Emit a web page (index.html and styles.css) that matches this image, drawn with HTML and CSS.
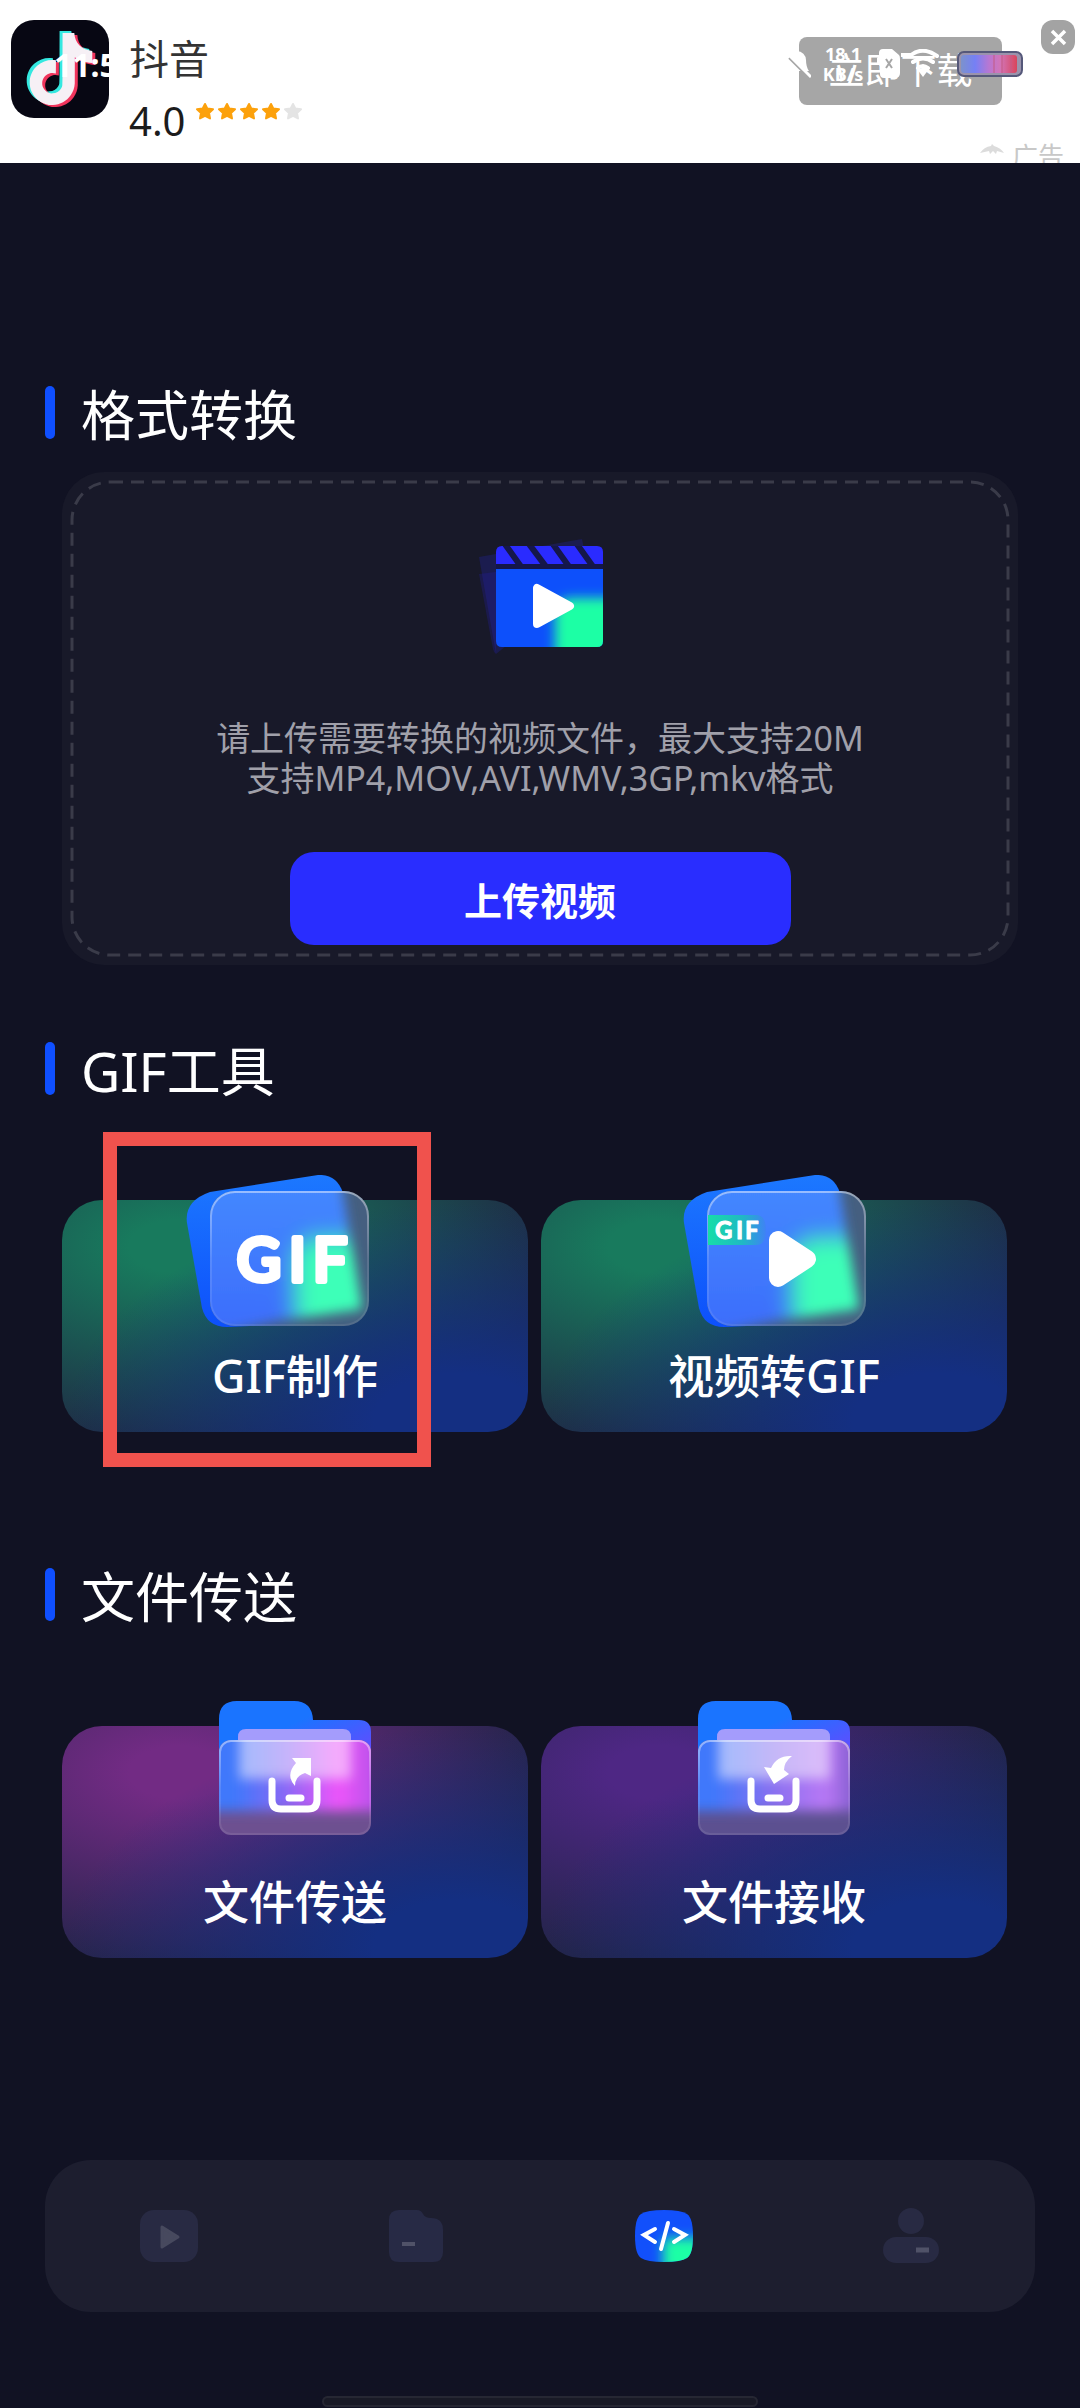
FILE: index.html
```html
<!DOCTYPE html>
<html lang="zh-CN">

<head>
    <meta charset="UTF-8">
    <meta name="viewport" content="width=device-width, initial-scale=1.0">
    <title>格式转换</title>
    <link rel="stylesheet" href="styles.css">
</head>

<body>
    <header class="ad">
        <svg class="ad-logo" viewBox="0 0 98 98">
            <defs>
                <path id="note" d="M12.525.02c1.31-.02 2.61-.01 3.91-.02.08 1.53.63 3.09 1.75 4.17 1.12 1.11 2.7 1.62 4.24 1.79v4.03c-1.44-.05-2.89-.35-4.2-.97-.57-.26-1.1-.59-1.62-.93-.01 2.92.01 5.84-.02 8.75-.08 1.4-.54 2.79-1.35 3.94-1.31 1.92-3.58 3.17-5.91 3.21-1.43.08-2.86-.31-4.08-1.03-2.02-1.19-3.44-3.37-3.65-5.71-.02-.5-.03-1-.01-1.49.18-1.9 1.12-3.72 2.58-4.96 1.66-1.44 3.98-2.13 6.15-1.72.02 1.48-.04 2.96-.04 4.44-.99-.32-2.15-.23-3.02.37-.63.41-1.11 1.04-1.36 1.75-.21.51-.15 1.07-.14 1.61.24 1.64 1.82 3.02 3.5 2.87 1.12-.01 2.19-.66 2.77-1.61.19-.33.4-.67.41-1.06.1-1.79.06-3.57.07-5.36.01-4.03-.01-8.05.02-12.07z" />
            </defs>
            <rect width="98" height="98" rx="23" fill="#070713" />
            <use href="#note" transform="translate(11 11) scale(3)" fill="#35e8e0" />
            <use href="#note" transform="translate(17 15) scale(3)" fill="#f0345c" />
            <use href="#note" transform="translate(14 13) scale(3)" fill="#f6f0f5" />
        </svg>
        <div class="ad-info">
            <div class="ad-name">抖音</div>
            <div class="ad-rating">
                <span>4.0</span>
                <svg class="stars" viewBox="0 0 108 18">
                    <defs>
                        <path id="star" d="M10 2l2.400 4.600 5.600.7-4 3.700 1 5.400-5-2.500-5 2.500 1-5.400-4-3.700 5.600-.7z" stroke-width="2" stroke-linejoin="round" />
                    </defs>
                    <use href="#star" fill="#fca10c" stroke="#fca10c" />
                    <use href="#star" x="22" fill="#fca10c" stroke="#fca10c" />
                    <use href="#star" x="44" fill="#fca10c" stroke="#fca10c" />
                    <use href="#star" x="66" fill="#fca10c" stroke="#fca10c" />
                    <use href="#star" x="88" fill="#e4e4e4" stroke="#e4e4e4" />
                </svg>
            </div>
        </div>
        <button class="ad-download" type="button">立即下载</button>
        <button class="ad-close" type="button" aria-label="关闭">
            <svg viewBox="0 0 34 34">
                <path d="M11 11l13 13M24 11L11 24" stroke="#fff" stroke-width="3.500" />
            </svg>
        </button>
        <div class="ad-tag">
            <svg viewBox="0 0 24 12">
                <path d="M0 9Q4 3 11 2l1-2 2 2q7 2 10 7l-7-2-1 3-3-3-3 3-1-3z" fill="#dcdcdc" />
            </svg>
            <span>广告</span>
        </div>

        <!-- system status bar over the banner -->
        <div class="status">
            <span class="time">11:58</span>
            <svg class="mute" viewBox="0 0 30 30">
                <path d="M3 22q4-4 4-11a9 9 0 0 1 18 0q0 7 3 11z" fill="#fff" />
                <path d="M8 9l20 20" stroke="#a6a6a6" stroke-width="2" />
                <path d="M6 4l24 24" stroke="#fff" stroke-width="3" />
            </svg>
            <div class="speed"><span>18.1</span><span>KB/s</span></div>
            <svg class="sim" viewBox="0 0 24 30">
                <path d="M2 4q0-4 4-4h9l7 6q1 1 1 4v14q0 5-5 5H7q-4 0-4-4V17L0 14V9l2-2z" fill="#fff" />
                <path d="M9 10l6 9M15 10l-6 9" stroke="#a6a6a6" stroke-width="2" />
            </svg>
            <svg class="wifi" viewBox="0 0 44 30">
                <path d="M0 6h10Q22-3 36 7M12 13q10-7 20 0M17 19q5-4 10 0" fill="none" stroke="#fff" stroke-width="4" stroke-linecap="round" />
                <path d="M16 20h12l-6 8z" fill="#fff" />
            </svg>
            <svg class="battery" viewBox="0 0 66 26">
                <defs>
                    <linearGradient id="charge">
                        <stop offset="0" stop-color="#7c92cc" />
                        <stop offset=".25" stop-color="#7580f5" />
                        <stop offset=".5" stop-color="#b877d2" />
                        <stop offset=".7" stop-color="#d275b8" />
                        <stop offset="1" stop-color="#d8455c" />
                    </linearGradient>
                </defs>
                <rect x="1" y="1" width="64" height="24" rx="6" fill="#9a93ac" stroke="#55587a" stroke-width="2" />
                <rect x="4" y="4" width="56" height="18" rx="3" fill="url(#charge)" />
                <path d="M37 4v18M45 4v18M54 4v18" stroke="#c45a84" stroke-width="1" />
            </svg>
        </div>
    </header>

    <main>
        <h2>格式转换</h2>
        <section class="upload">
            <svg class="dashes">
                <rect x="10" y="10" rx="38" />
            </svg>
            <svg class="clapper" viewBox="0 0 130 120">
                <defs>
                    <filter id="soft" x="-50%" y="-50%" width="200%" height="200%">
                        <feGaussianBlur stdDeviation="6" />
                    </filter>
                    <filter id="softer" x="-50%" y="-50%" width="200%" height="200%">
                        <feGaussianBlur stdDeviation="10" />
                    </filter>
                    <clipPath id="clapperBody">
                        <path d="M21 31h107v72q0 6-6 6H27q-6 0-6-6z" />
                    </clipPath>
                    <clipPath id="clapperTop">
                        <path d="M21 26V14q0-6 6-6h95q6 0 6 6v12z" />
                    </clipPath>
                </defs>
                <path d="M4 19l103-18 8 40-94 75z" fill="#20218a" opacity=".4" />
                <path d="M4 36l17-2v82q-2-1-3-5z" fill="#241fa0" opacity=".3" />
                <g clip-path="url(#clapperTop)">
                    <rect x="21" y="8" width="107" height="20" fill="#2a2bff" />
                    <path d="M27 2l20 28M51 2l21 28M75 2l20 28M99 2l20 28" stroke="#15174a" stroke-width="6" />
                </g>
                <path d="M21 26h107v5H21z" fill="#14164a" />
                <g clip-path="url(#clapperBody)">
                    <rect x="21" y="31" width="107" height="78" fill="#0d50fb" />
                    <rect x="80" y="60" width="70" height="70" rx="16" fill="#1effa5" filter="url(#soft)" />
                </g>
                <path d="M62 50v36l33-18z" fill="#fff" stroke="#fff" stroke-width="8" stroke-linejoin="round" />
            </svg>
            <p>请上传需要转换的视频文件，最大支持20M<br>支持MP4,MOV,AVI,WMV,3GP,mkv格式</p>
            <button class="upload-btn" type="button">上传视频</button>
        </section>

        <h2>GIF工具</h2>
        <div class="tools">
            <a class="tool green marked" href="#">
                <svg class="tool-icon" viewBox="0 0 232 160">
                    <defs>
                        <linearGradient id="blue" x2="0" y2="1">
                            <stop offset="0" stop-color="#1c78ff" />
                            <stop offset="1" stop-color="#0d50fb" />
                        </linearGradient>
                        <linearGradient id="frost" x2="0" y2="1">
                            <stop offset="0" stop-color="#458cff" />
                            <stop offset="1" stop-color="#3b68fb" />
                        </linearGradient>
                        <linearGradient id="edge" x2="0" y2="1">
                            <stop offset="0" stop-color="#fff" stop-opacity=".45" />
                            <stop offset=".5" stop-color="#fff" stop-opacity=".12" />
                            <stop offset="1" stop-color="#fff" stop-opacity=".08" />
                        </linearGradient>
                        <clipPath id="glass">
                            <rect x="48" y="16" width="159" height="135" rx="25" />
                        </clipPath>
                        <clipPath id="sheet">
                            <path d="M30 0h148l22 134-84 12-90 20z" />
                        </clipPath>
                        <g id="gifCard">
                            <path d="M48 17L156 0q19-1 25 18l18 105q2 18-16 24l-118 5q-20 0-25-19L25 48q-3-22 23-31z" fill="url(#blue)" />
                            <g clip-path="url(#glass)">
                                <rect x="48" y="16" width="159" height="135" fill="#455f80" />
                                <g filter="url(#soft)">
                                    <g clip-path="url(#sheet)">
                                        <path d="M20-10h200v190H20z" fill="url(#frost)" />
                                        <rect x="132" y="62" width="100" height="100" rx="24" fill="#3effb8" filter="url(#softer)" />
                                    </g>
                                </g>
                            </g>
                            <rect x="49" y="17" width="157" height="133" rx="24" fill="none" stroke="url(#edge)" stroke-width="2" />
                        </g>
                    </defs>
                    <g transform="translate(-17 0)">
                        <use href="#gifCard" />
                        <text class="gif-big" y="106"><tspan x="75">G</tspan><tspan x="127">I</tspan><tspan x="151">F</tspan></text>
                    </g>
                </svg>
                <span>GIF制作</span>
            </a>
            <a class="tool green" href="#">
                <svg class="tool-icon" viewBox="0 0 232 160">
                    <defs>
                        <linearGradient id="tag">
                            <stop offset="0" stop-color="#17dda8" />
                            <stop offset=".6" stop-color="#20b8c4" />
                            <stop offset="1" stop-color="#3f82f5" />
                        </linearGradient>
                    </defs>
                    <use href="#gifCard" x="1" />
                    <path d="M50 40h48q10 0 10 15t-10 15H50z" fill="url(#tag)" />
                    <text class="gif-small" y="64"><tspan x="57">G</tspan><tspan x="78">I</tspan><tspan x="87">F</tspan></text>
                    <path d="M120 65v38l29-19z" fill="#fff" stroke="#fff" stroke-width="18" stroke-linejoin="round" />
                </svg>
                <span>视频转GIF</span>
            </a>
        </div>

        <h2>文件传送</h2>
        <div class="tools">
            <a class="tool pink" href="#">
                <svg class="tool-icon" viewBox="0 0 232 160">
                    <defs>
                        <linearGradient id="folderBack" x2="1" y2="1">
                            <stop offset=".4" stop-color="#1a74ff" />
                            <stop offset=".8" stop-color="#5a50ff" />
                        </linearGradient>
                        <linearGradient id="pinkFront">
                            <stop offset=".15" stop-color="#3f78fb" />
                            <stop offset=".45" stop-color="#8a68f5" />
                            <stop offset=".75" stop-color="#ee55fa" />
                            <stop offset="1" stop-color="#b050e8" />
                        </linearGradient>
                        <linearGradient id="violetFront">
                            <stop offset=".15" stop-color="#3f78fb" />
                            <stop offset=".5" stop-color="#8a70f0" />
                            <stop offset=".8" stop-color="#b878f5" />
                            <stop offset="1" stop-color="#7a58c8" />
                        </linearGradient>
                        <clipPath id="folderFront">
                            <rect x="40" y="39" width="152" height="95" rx="12" />
                        </clipPath>
                        <path id="folder" d="M40 18Q40 0 58 0h57q18 0 19 19h46q12 0 12 12v40H40z" />
                        <path id="tray" d="M93 80v19q0 9 9 9h27q9 0 9-9V80M110 97h12" fill="none" stroke="#fff" stroke-width="7" stroke-linecap="round" />
                        <g id="paper">
                            <rect x="60" y="28" width="112" height="50" fill="#fff" opacity=".5" filter="url(#soft)" />
                        </g>
                    </defs>
                    <use href="#folder" fill="url(#folderBack)" />
                    <path d="M59 45V36q0-8 8-8h97q8 0 8 8v9z" fill="#a49cfc" />
                    <g clip-path="url(#folderFront)">
                        <rect x="40" y="39" width="152" height="95" fill="#6d5090" />
                        <rect x="30" y="20" width="172" height="90" fill="url(#pinkFront)" filter="url(#soft)" />
                        <use href="#paper" />
                    </g>
                    <rect x="41" y="40" width="150" height="93" rx="11" fill="none" stroke="url(#edge)" stroke-width="2" />
                    <use href="#tray" />
                    <path d="M113 57h19v18l-6-3q-10 3-10 13-10-11 1-23z" fill="#fff" />
                </svg>
                <span>文件传送</span>
            </a>
            <a class="tool violet" href="#">
                <svg class="tool-icon" viewBox="0 0 232 160">
                    <use href="#folder" fill="url(#folderBack)" />
                    <path d="M59 45V36q0-8 8-8h97q8 0 8 8v9z" fill="#a49cfc" />
                    <g clip-path="url(#folderFront)">
                        <rect x="40" y="39" width="152" height="95" fill="#5c5090" />
                        <rect x="30" y="20" width="172" height="90" fill="url(#violetFront)" filter="url(#soft)" />
                        <use href="#paper" />
                    </g>
                    <rect x="41" y="40" width="150" height="93" rx="11" fill="none" stroke="url(#edge)" stroke-width="2" />
                    <use href="#tray" />
                    <path d="M134 55q-8 6-8 14l5 4-15 10-10-17 7 1q6-13 21-12z" fill="#fff" />
                </svg>
                <span>文件接收</span>
            </a>
        </div>
    </main>

    <nav class="tabbar">
        <a href="#" aria-label="视频">
            <svg viewBox="0 0 58 56">
                <rect y="2" width="58" height="52" rx="14" fill="#282a43" />
                <path d="M22 19v20l16-10z" fill="#47495e" stroke="#47495e" stroke-width="3" stroke-linejoin="round" />
            </svg>
        </a>
        <a href="#" aria-label="文件">
            <svg viewBox="0 0 58 56">
                <path d="M2 12Q2 2 12 2h18q4 0 6 4t8 4q12 0 12 12v22q0 10-10 10H12Q2 54 2 44z" fill="#272a45" />
                <path d="M15 36h13" stroke="#505268" stroke-width="4" />
            </svg>
        </a>
        <a href="#" aria-label="工具" aria-current="page">
            <svg viewBox="0 0 58 56">
                <defs>
                    <clipPath id="tile">
                        <path d="M0 28Q0 10 6 6t23-4 23 4 6 22-6 22-23 4-23-4-6-22z" />
                    </clipPath>
                </defs>
                <g clip-path="url(#tile)">
                    <rect width="58" height="56" fill="#1250fb" />
                    <rect x="28" y="30" width="50" height="50" fill="#1effa5" filter="url(#soft)" />
                </g>
                <path d="M20 21L9 27l11 7M39 21l11 6-11 7M33 15l-7 26" fill="none" stroke="#fff" stroke-width="4" stroke-linecap="round" />
            </svg>
        </a>
        <a href="#" aria-label="我的">
            <svg viewBox="0 0 58 56">
                <circle cx="29" cy="13" r="13" fill="#282a43" />
                <rect x="1" y="29" width="56" height="26" rx="13" fill="#282a43" />
                <path d="M34 42h13" stroke="#505268" stroke-width="5" />
            </svg>
        </a>
    </nav>
    <div class="home-bar"></div>
</body>

</html>
```

FILE: styles.css
```css
*,
*::before,
*::after {
    box-sizing: border-box;
}

body {
    margin: 0;
    min-height: 100vh;
    display: flex;
    flex-direction: column;
    background: #111223;
    color: #fff;
    font-family: 'Noto Sans', 'Noto Sans CJK SC', sans-serif;
}

svg {
    display: block;
}

button {
    border: none;
    padding: 0;
    color: #fff;
    font-family: inherit;
    cursor: pointer;
}

a {
    color: inherit;
    text-decoration: none;
}

/* ad banner */
.ad {
    position: relative;
    display: flex;
    align-items: flex-start;
    height: 163px;
    padding: 20px 5px 0 11px;
    background: #fff;
    overflow: hidden;
}

.ad-logo {
    width: 98px;
    height: 98px;
}

.ad-info {
    flex: 1;
    margin-left: 20px;
    padding-top: 8px;
    font-size: 40px;
    line-height: 62px;
}

.ad-name {
    color: #333;
}

.ad-rating {
    display: flex;
    gap: 10px;
    color: #1c1c1c;
}

.stars {
    width: 108px;
    height: 18px;
    margin-top: 12px;
}

.ad-download {
    width: 203px;
    height: 68px;
    margin: 17px 39px 0 0;
    border-radius: 8px;
    background: #a6a6a6;
    font-size: 36px;
    line-height: 68px;
}

.ad-close {
    width: 34px;
    height: 34px;
    border-radius: 12px;
    background: #a3a3a3;
}

.ad-tag {
    position: absolute;
    right: 16px;
    top: 138px;
    display: flex;
    gap: 8px;
    color: #c8c8c8;
    font-size: 26px;
    line-height: 36px;
}

.ad-tag svg {
    width: 24px;
    height: 12px;
    margin-top: 6px;
}

/* system status bar */
.status {
    position: absolute;
    left: 54px;
    right: 57px;
    top: 44px;
    height: 40px;
    display: flex;
    align-items: center;
}

.time {
    flex: 1;
    font-size: 32px;
    font-weight: 700;
}

.mute {
    width: 30px;
    height: 30px;
}

.speed {
    display: flex;
    flex-direction: column;
    align-items: center;
    margin: 0 14px 0 12px;
    width: 40px;
    font-size: 18px;
    font-weight: 700;
    line-height: 20px;
}

.sim {
    width: 24px;
    height: 30px;
}

.wifi {
    width: 44px;
    height: 30px;
    margin-right: 12px;
}

.battery {
    width: 66px;
    height: 26px;
}

main {
    padding: 223px 45px 0;
}

h2 {
    display: flex;
    gap: 26px;
    margin: 0;
    font-size: 54px;
    font-weight: 400;
    line-height: 58px;
}

h2::before {
    content: '';
    width: 10px;
    height: 53px;
    border-radius: 5px;
    background: #0f4fff;
}

/* upload card */
.upload {
    position: relative;
    display: flex;
    flex-direction: column;
    align-items: center;
    margin: 28px 17px 77px;
    padding: 66px 0 20px;
    border-radius: 42px;
    background: #181929;
}

.dashes {
    position: absolute;
    inset: 0;
    width: 100%;
    height: 100%;
}

.dashes rect {
    width: calc(100% - 20px);
    height: calc(100% - 20px);
    fill: none;
    stroke: #3a3b49;
    stroke-width: 3;
    stroke-dasharray: 13 8;
}

.clapper {
    width: 130px;
    height: 120px;
}

.upload p {
    margin: 60px 0 54px;
    color: #a0a0aa;
    font-size: 34px;
    line-height: 40px;
    text-align: center;
}

.upload-btn {
    position: relative;
    width: 501px;
    height: 93px;
    border-radius: 24px;
    background: #292dff;
    font-size: 38px;
    font-weight: 700;
}

/* tool tiles */
.tools {
    display: grid;
    grid-template-columns: 1fr 1fr;
    gap: 13px;
    margin: 100px 28px 136px 17px;
}

.tool {
    position: relative;
    display: flex;
    flex-direction: column;
    align-items: center;
    height: 232px;
    border-radius: 40px;
    font-size: 46px;
    font-weight: 500;
    line-height: 60px;
}

.green {
    background:
        radial-gradient(ellipse at 85% 95%, #142f82 15%, transparent 70%),
        radial-gradient(ellipse at 25% 20%, #187a5d 10%, transparent 75%),
        #1e2c45;
}

.pink {
    background:
        radial-gradient(ellipse at 85% 95%, #142f82 15%, transparent 70%),
        radial-gradient(ellipse at 25% 20%, #722b84 10%, transparent 75%),
        #23244a;
}

.violet {
    background:
        radial-gradient(ellipse at 85% 95%, #142f82 15%, transparent 70%),
        radial-gradient(ellipse at 25% 20%, #4e2784 10%, transparent 75%),
        #202446;
}

.tool-icon {
    width: 232px;
    height: 160px;
    margin: -25px 0 10px;
}

.gif-big,
.gif-small {
    font-family: Lato, sans-serif;
    font-weight: 700;
    fill: #fff;
    stroke: #fff;
    stroke-linejoin: round;
}

.gif-big {
    font-size: 60px;
    font-weight: 400;
    stroke-width: 6px;
}

.gif-small {
    font-size: 24px;
    stroke-width: 1px;
}

.marked::after {
    content: '';
    position: absolute;
    left: 41px;
    top: -68px;
    width: 328px;
    height: 335px;
    border: 14px solid #f0524d;
}

/* bottom navigation */
.tabbar {
    display: flex;
    align-items: center;
    height: 152px;
    margin: auto 45px 84px;
    border-radius: 46px;
    background: #1d1e2f;
}

.tabbar a {
    flex: 1;
    display: flex;
    justify-content: center;
}

.tabbar svg {
    width: 58px;
    height: 56px;
}

.home-bar {
    width: 436px;
    height: 11px;
    margin: 0 auto 1px;
    border: 2px solid #262733;
    border-radius: 6px;
    background: #191a26;
}
```
